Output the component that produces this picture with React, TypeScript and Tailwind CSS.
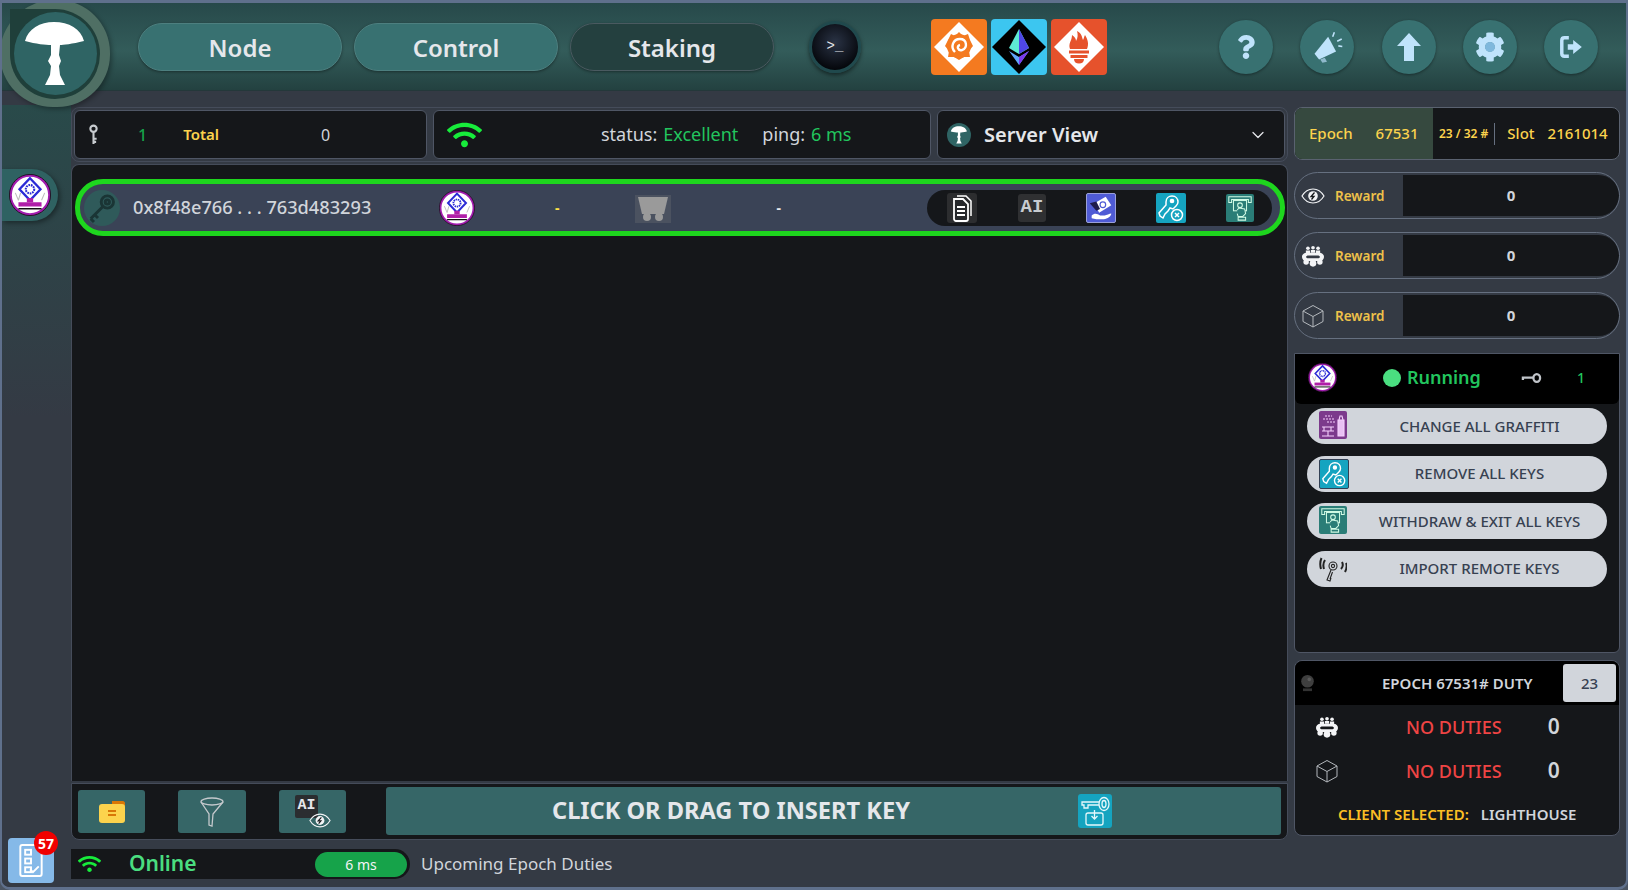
import React from "react";
import { ChevronDown } from "lucide-react";
import { FaQuestion, FaCog, FaWifi } from "react-icons/fa";

const Mushroom = ({ className = "" }: { className?: string }) => (
  <svg viewBox="0 0 110 110" className={className}>
    <path fill="#fff" d="M25 42C28 30 40 23 54 23C69 23 81 30 84 42C72 45 63 46 60 46L59 56L61 62L59 67L60 76L65 86H45L50 76L51 67L48 62L51 56L51 46C46 46 36 45 25 42Z" />
  </svg>
);

const Wcs = ({ className = "" }: { className?: string }) => (
  <svg viewBox="0 0 40 40" className={className}>
    <circle cx="20" cy="20" r="18.5" fill="#fff" stroke="#a21caf" strokeWidth="2.4" />
    <circle cx="20" cy="20" r="19.6" fill="none" stroke="#111" strokeWidth="0.8" />
    <path d="M20 4L30 14.5L20 25L10 14.5Z" fill="#fff" stroke="#2b2bd6" strokeWidth="2.2" />
    <circle cx="20" cy="14.5" r="4" fill="none" stroke="#2b2bd6" strokeWidth="2" strokeDasharray="1.6 0.8" />
    <rect x="17" y="23" width="6" height="4" fill="#b01fa8" />
    <path d="M9 27H31V31H9Z" fill="#b01fa8" />
    <path d="M9 33H31" stroke="#111" strokeWidth="1.4" />
    <path d="M6 18L9 25M11 18L9 25M34 18L31 25" stroke="#bbb" strokeWidth="1" fill="none" />
  </svg>
);

const Key = ({ className = "", stroke = "#d1d5db" }: { className?: string; stroke?: string }) => (
  <svg viewBox="0 0 24 24" className={className} fill="none" stroke={stroke} strokeWidth="2.2">
    <circle cx="16" cy="7.5" r="4.6" />
    <circle cx="16" cy="7.5" r="1.6" />
    <path d="M12.5 11L3.5 20M3.5 20L6 22.5M6.5 17L9 19.5" />
  </svg>
);

const Cube = ({ className = "" }: { className?: string }) => (
  <svg viewBox="0 0 24 24" className={className} fill="none" stroke="#b4b8bd" strokeWidth="1">
    <path d="M12 1.5L22 7V17.5L12 23L2 17.5V7Z" />
    <path d="M2 7L12 12.5L22 7M12 12.5V23" />
  </svg>
);

const Committee = ({ className = "" }: { className?: string }) => (
  <svg viewBox="0 0 24 24" className={className} fill="#f3f4f6">
    <circle cx="6.5" cy="3.5" r="2" />
    <circle cx="12" cy="3" r="2" />
    <circle cx="17.5" cy="3.5" r="2" />
    <path d="M4.2 9V6H8.8V9ZM9.7 8.5V5.5H14.3V8.5ZM15.2 9V6H19.8V9Z" />
    <path fillRule="evenodd" d="M5 8.5H19C22 8.5 24 10.5 24 13C24 15.5 22 17.5 19 17.5H5C2 17.5 0 15.5 0 13C0 10.5 2 8.5 5 8.5ZM7 11.5C5.5 11.5 4.5 12.2 4.5 13C4.5 13.8 5.5 14.5 7 14.5H17C18.5 14.5 19.5 13.8 19.5 13C19.5 12.2 18.5 11.5 17 11.5Z" />
    <circle cx="4.5" cy="18.5" r="3" />
    <circle cx="12" cy="20" r="3.6" />
    <circle cx="19.5" cy="18.5" r="3" />
  </svg>
);

const Eye = ({ className = "" }: { className?: string }) => (
  <svg viewBox="0 0 24 16" className={className} fill="none" stroke="#f3f4f6" strokeWidth="1.2">
    <path d="M1 8C4 3 8 1 12 1C16 1 20 3 23 8C20 13 16 15 12 15C8 15 4 13 1 8Z" />
    <circle cx="12" cy="8" r="4.8" fill="#f3f4f6" stroke="none" />
    <path d="M13.5 4.5L10 8.5H13L10.5 11.5" stroke="#16181b" strokeWidth="1.3" />
  </svg>
);

const Grafana = () => (
  <svg viewBox="0 0 56 56" className="h-full w-full">
    <path d="M28 3L53 28L28 53L3 28Z" fill="#fff" />
    <circle cx="28" cy="27" r="12" fill="#f47a20" />
    <path d="M17 21L20 15L24 17L28 13L32 17L37 15L39 21L42 27L38 32L39 38L33 38L28 41L23 38L17 38L18 32L14 27Z" fill="#f47a20" />
    <path d="M24 33C19 28 22 20 29 20C36 20 37 29 31 31C27 32 25 27 29 26" fill="none" stroke="#fff" strokeWidth="2.4" />
  </svg>
);

const Ethereum = () => (
  <svg viewBox="0 0 56 56" className="h-full w-full">
    <path d="M28 1L55 28L28 55L1 28Z" fill="#000" />
    <path d="M28 10L18 29L28 35L38 29Z" fill="#5eead4" />
    <path d="M28 10V35L38 29Z" fill="#4f46e5" />
    <path d="M18 32L28 46L38 32L28 38Z" fill="#60a5fa" />
    <path d="M28 38V46L38 32Z" fill="#7c3aed" />
  </svg>
);

const Prometheus = () => (
  <svg viewBox="0 0 56 56" className="h-full w-full">
    <path d="M28 3L53 28L28 53L3 28Z" fill="#fff" />
    <path d="M19 30C17 24 21 22 21 16C24 18 25 20 25 22C27 19 27 15 26 12C31 14 31 19 32 21C33 19 33 18 34 16C37 21 38 25 36 30Z" fill="#e6522c" />
    <path d="M18 31.5H38V34.5H18ZM19.5 36H36.5V39H19.5ZM23 40H33C33 43 31 44.5 28 44.5C25 44.5 23 43 23 40Z" fill="#e6522c" />
  </svg>
);

const Doc = () => (
  <svg viewBox="0 0 30 30" className="h-full w-full" fill="none" stroke="#fff" strokeWidth="1.8">
    <path d="M10 3H19L24 8V23" strokeWidth="1.5" />
    <path d="M7 6H16L21 11V26C21 27 20 28 19 28H9C8 28 7 27 7 26Z" fill="#26282b" />
    <path d="M10 14H18M10 18H18M10 22H18" />
  </svg>
);

const KeyRemove = () => (
  <svg viewBox="0 0 30 30" className="h-full w-full" fill="none" stroke="#fff" strokeWidth="1.5">
    <path d="M10 9C10 5 13 3 16 3C20 3 22 6 22 9C22 11 21 12 20 13L17 16L14 15L12 18L9 21L7 25L4 23L3 20L10 12Z" />
    <circle cx="16" cy="8" r="1.6" fill="#fff" />
    <circle cx="21" cy="22" r="5.5" />
    <path d="M19 20L23 24M23 20L19 24" />
  </svg>
);

const Atm = () => (
  <svg viewBox="0 0 30 30" className="h-full w-full" fill="none" stroke="#d1fae5" strokeWidth="1.1">
    <path d="M3 3H27V9H24V6H6V9H3Z" />
    <rect x="8" y="7" width="14" height="11" />
    <circle cx="15" cy="12" r="2.5" />
    <path d="M12 17L14 15L20 16L21 21L18 24H13L12 21M13 25H21V28H13Z" fill="#2a7d77" />
  </svg>
);

const Hand = () => (
  <svg viewBox="0 0 30 30" className="h-full w-full">
    <path d="M8 10L20 3L26 12L13 20Z" fill="#fff" />
    <circle cx="17" cy="11.5" r="3" fill="none" stroke="#4f5bd5" strokeWidth="1.3" />
    <path d="M3 10L10 8L14 16L10 18Z" fill="#1e1b4b" />
    <path d="M5 23C8 20 11 21 14 23H19C21 23 24 21 26 21C26 24 22 27 18 27H10L5 26Z" fill="#fff" />
  </svg>
);

const Graffiti = () => (
  <svg viewBox="0 0 28 28" className="h-full w-full" fill="none" stroke="#f5d0fe" strokeWidth="1.1">
    <path d="M19 9H25V25H19Z" fill="#f5d0fe" fillOpacity="0.9" />
    <path d="M20 9L21 5H23L24 9" />
    <path d="M6 5H13M4 8H15M8 11H16" strokeDasharray="2 1" />
    <path d="M3 16H15M5 16V20M12 16V20M3 20H15M9 20V25M3 25H15" />
  </svg>
);

const Remote = () => (
  <svg viewBox="0 0 28 28" className="h-full w-full" fill="none" stroke="#222" strokeWidth="1.1">
    <circle cx="14" cy="11" r="4" />
    <circle cx="14" cy="11" r="1.6" />
    <path d="M12 15L8 25L11 26L12 23M13.5 17L11 24" />
    <path d="M6 5C4 8 4 11 5 14M2.5 3C0.8 7 0.8 10 2 14M22 14C24 12 24 9 23 7M26 17C28 13 28 10 27 8" strokeWidth="2" />
  </svg>
);

const NavButton = ({ label, dark }: { label: string; dark?: boolean }) => (
  <button
    className={
      dark
        ? "h-[48px] w-[204px] rounded-[24px] border border-[#4a5a60] bg-[#24403f] pt-[3px] text-[24px] font-semibold text-[#e5e7eb] shadow-[0_1px_3px_#0006]"
        : "h-[48px] w-[204px] rounded-[24px] border border-[#4d7f7f] bg-[#387171] pt-[3px] text-[24px] font-semibold text-[#e5e7eb] shadow-[0_1px_3px_#0006]"
    }
  >
    {label}
  </button>
);

const RoundIcon = ({ children }: { children: React.ReactNode }) => (
  <div className="flex h-[54px] w-[54px] items-center justify-center rounded-full bg-[#387171] text-[#bfe3fb] shadow-[0_1px_3px_#0006]">
    {children}
  </div>
);

const Reward = ({ icon }: { icon: React.ReactNode }) => (
  <div className="flex h-[47px] items-center overflow-hidden rounded-[24px] border border-[#667080] bg-[#343a44] py-[2px]">
    <div className="flex w-[108px] shrink-0 items-center pl-[5px]">
      <div className="flex w-[26px] items-center justify-center">{icon}</div>
      <span className="ml-[9px] pt-[1px] text-[13.5px] font-semibold text-[#eec14a]">Reward</span>
    </div>
    <div className="flex h-full flex-1 items-center justify-center rounded-r-[22px] bg-[#15171a] text-[15px] font-bold text-[#d1d5db]">0</div>
  </div>
);

const ActionButton = ({ icon, label }: { icon: React.ReactNode; label: string }) => (
  <button className="flex h-[36px] w-[300px] items-center rounded-[18px] bg-[#d1d5db] pl-[12px] text-[15px] font-medium text-[#374151]">
    <span className="h-[30px] w-[28px] shrink-0">{icon}</span>
    <span className="flex-1 pl-[5px] text-center">{label}</span>
  </button>
);

const ToolButton = ({ children, className }: { children: React.ReactNode; className: string }) => (
  <div className={className}>{children}</div>
);

export default function App() {
  return (
    <div className="h-[890px] w-[1628px] bg-[#4b5563] font-['Noto_Sans',sans-serif]">
      <div className="relative flex h-full w-full flex-col overflow-hidden rounded-b-[10px] border-x-[2px] border-t-[3px] border-b-[3px] border-[#5f708c] bg-[#343a44]">
        {/* Logo */}
        <div className="absolute left-[-2px] top-[-3px] z-20 flex h-[107px] w-[110px] items-center justify-center rounded-[58px_56px_56px_56px] bg-[#4f6f64] shadow-[2px_2px_5px_#0005]">
          <div className="flex h-[90px] w-[90px] items-center justify-center rounded-[0_45px_45px_45px] bg-[#1f3f3a]">
            <div className="flex h-[83px] w-[83px] items-center justify-center rounded-full bg-[#2f6464]">
              <Mushroom className="h-[110px] w-[110px] shrink-0" />
            </div>
          </div>
        </div>

        {/* Header */}
        <header className="flex h-[88px] shrink-0 items-center border-b border-[#24383a] bg-[linear-gradient(180deg,#27494a_0%,#335c5a_55%,#234140_100%)] pl-[136px]">
          <div className="flex gap-[12px]">
            <NavButton label="Node" />
            <NavButton label="Control" />
            <NavButton label="Staking" dark />
          </div>
          <div className="ml-[35px] flex h-[52px] w-[52px] items-center justify-center rounded-full border-[3px] border-[#20494d] bg-[radial-gradient(circle_at_50%_40%,#2a3345,#05070c_75%)] shadow-[0_2px_4px_#0008]">
            <span className="font-['Liberation_Mono',monospace] text-[14px] text-[#e5e7eb]">&gt;_</span>
          </div>
          <div className="ml-[70px] flex gap-[4px]">
            <div className="h-[56px] w-[56px] rounded-[4px] bg-[#f47a20]"><Grafana /></div>
            <div className="h-[56px] w-[56px] rounded-[4px] bg-[#3cc6f0]"><Ethereum /></div>
            <div className="h-[56px] w-[56px] rounded-[4px] bg-[#e6522c]"><Prometheus /></div>
          </div>
          <div className="ml-[112px] flex gap-[27.3px]">
            <RoundIcon><FaQuestion className="h-[24px] w-[18px]" /></RoundIcon>
            <RoundIcon>
              <svg viewBox="0 0 30 30" className="h-[34px] w-[34px]" fill="currentColor">
                <path d="M4 21L16 6L23 19L8 26Z" />
                <path d="M9 26L13 24.5L15 28L11 29Z" fill="#8fb9cc" />
                <path d="M20 6L21.5 2M24 10L28 8M25 14L28.5 14.5" fill="none" stroke="currentColor" strokeWidth="1.4" />
              </svg>
            </RoundIcon>
            <RoundIcon>
              <svg viewBox="0 0 24 28" className="h-[28px] w-[24px]" fill="currentColor">
                <path d="M12 0L24 13H17V28H7V13H0Z" />
              </svg>
            </RoundIcon>
            <RoundIcon>
              <div className="relative flex h-[30px] w-[30px] items-center justify-center">
                <FaCog className="h-[30px] w-[30px]" />
                <span className="absolute h-[10px] w-[10px] rounded-full bg-[#7fb8dc]" />
              </div>
            </RoundIcon>
            <RoundIcon>
              <svg viewBox="0 0 24 24" className="h-[26px] w-[26px]">
                <path d="M10 3.5H6C4.5 3.5 3.5 4.5 3.5 6V18C3.5 19.5 4.5 20.5 6 20.5H10" fill="none" stroke="currentColor" strokeWidth="3.2" />
                <path d="M9 9.5H14V5.5L22 12L14 18.5V14.5H9Z" fill="currentColor" />
              </svg>
            </RoundIcon>
          </div>
        </header>

        {/* Body */}
        <div className="flex min-h-0 flex-1">
          {/* Sidebar */}
          <aside className="mt-[14px] flex w-[69px] shrink-0 flex-col bg-[linear-gradient(180deg,#294a4a_0%,#343a44_40%)]">
            <div className="mt-[64px] flex h-[52px] w-[56px] items-center justify-center rounded-r-[26px] bg-[#2f6262] pr-[1px] shadow-[2px_2px_5px_#0006]">
              <Wcs className="h-[42px] w-[42px]" />
            </div>
            <div className="relative mb-[4px] ml-[6px] mt-auto h-[45px] w-[46px] rounded-[4px] bg-[#85b9e8] p-[6px]">
              <svg viewBox="0 0 30 34" className="h-full w-full" fill="none" stroke="#fff" strokeWidth="2">
                <rect x="4" y="1" width="22" height="32" rx="2" />
                <rect x="9" y="6" width="6" height="5" />
                <rect x="9" y="15" width="6" height="5" />
                <rect x="9" y="24" width="6" height="5" />
                <path d="M14 26L17 29L23 23" />
              </svg>
              <span className="absolute right-[-4px] top-[-7px] flex h-[24px] w-[24px] items-center justify-center rounded-full bg-[#f00000] text-[14px] font-bold text-white">57</span>
            </div>
          </aside>

          {/* Main */}
          <main className="flex w-[1217px] shrink-0 flex-col pt-[16px]">
            <div className="flex h-[55px] gap-[6px] rounded-[8px] border border-[#454c5a] p-[2px]">
              <div className="flex h-[49px] w-[353px] items-center rounded-[6px] border border-[#4f5665] bg-[#15171a] pl-[13px]">
                <svg viewBox="0 0 10 20" className="h-[21px] w-[11px]" fill="none" stroke="#c8ccd0" strokeWidth="2">
                  <circle cx="5" cy="4.5" r="3" />
                  <path d="M5 8V19M5 14H8M5 17H7.5" />
                </svg>
                <span className="ml-[39px] text-[16px] font-medium text-[#16a34a]">1</span>
                <span className="ml-[36px] text-[15px] font-semibold text-[#fcd34d]">Total</span>
                <span className="ml-[102px] text-[16px] text-[#d1d5db]">0</span>
              </div>
              <div className="flex h-[49px] w-[498px] items-center rounded-[6px] border border-[#4f5665] bg-[#15171a] pl-[12px]">
                <FaWifi className="h-[28px] w-[37px] text-[#17ec3b]" />
                <span className="ml-[118px] text-[18px] text-[#d1d5db]">status:</span>
                <span className="ml-[6px] text-[18px] text-[#22c55e]">Excellent</span>
                <span className="ml-[24px] text-[18px] text-[#d1d5db]">ping:</span>
                <span className="ml-[6px] text-[18px] text-[#22c55e]">6 ms</span>
              </div>
              <div className="flex h-[49px] w-[348px] items-center rounded-[6px] border border-[#4f5665] bg-[#15171a] pl-[9px]">
                <div className="flex h-[24px] w-[24px] items-center justify-center rounded-full bg-[#2f6464]">
                  <Mushroom className="h-[30px] w-[30px] shrink-0" />
                </div>
                <span className="ml-[13px] text-[20px] font-semibold text-[#e5e7eb]">Server View</span>
                <ChevronDown className="ml-auto mr-[16px] h-[20px] w-[20px] text-[#e5e7eb]" strokeWidth={1.5} />
              </div>
            </div>

            <section className="mt-[2px] h-[617px] rounded-t-[8px] border-x border-t border-[#454c5a] bg-[#15171a] px-[3px] pt-[14px]">
              <div className="flex h-[57px] w-[1210px] items-center rounded-[28px] border-[5px] border-[#1ed61e] bg-[#3a4356] pl-[4px]">
                <div className="flex h-[36px] w-[36px] items-center justify-center rounded-full bg-[#2f5a5a]">
                  <Key className="h-[32px] w-[32px]" stroke="#1a3535" />
                </div>
                <span className="ml-[13px] w-[306px] text-[18.2px] font-medium text-[#d1d5db]">0x8f48e766 . . . 763d483293</span>
                <Wcs className="h-[36px] w-[36px] shrink-0" />
                <span className="ml-[80px] text-[14px] font-bold text-[#fde047]">-</span>
                <div className="ml-[76px] mt-[3px] flex h-[28px] w-[36px] items-center justify-center bg-[#4b5260]">
                  <svg viewBox="0 0 36 28" className="h-full w-full" fill="#9a9a9a">
                    <path d="M3 2H33L29 19H7Z" />
                    <circle cx="12" cy="22" r="4" />
                    <circle cx="24" cy="22" r="4" />
                  </svg>
                </div>
                <span className="ml-[105px] text-[14px] font-bold text-[#e5e7eb]">-</span>
                <div className="ml-[146px] flex h-[36px] w-[345px] items-center rounded-[18px] bg-[#15171a] pl-[20px]">
                  <div className="h-[30px] w-[30px] rounded-[3px] bg-[#2c2d2f]"><Doc /></div>
                  <div className="ml-[41px] flex h-[28px] w-[28px] items-center justify-center rounded-[3px] bg-[#2f3032] font-['Liberation_Mono',monospace] text-[19px] font-bold text-[#c7cbd0]">AI</div>
                  <div className="ml-[40px] h-[30px] w-[30px] rounded-[2px] border border-[#9aa0d8] bg-[#4f5bd5]"><Hand /></div>
                  <div className="ml-[40px] h-[30px] w-[30px] rounded-[2px] bg-[#15a4c0]"><KeyRemove /></div>
                  <div className="ml-[40px] h-[28px] w-[28px] rounded-[2px] bg-[#2a7d77]"><Atm /></div>
                </div>
              </div>
            </section>

            <div className="mt-[2px] flex h-[57px] rounded-b-[8px] border-x border-b border-t border-[#454c5a] bg-[#15171a] pl-[6px] pr-[6px] pt-[3px]">
              <ToolButton className="mt-[3px] flex h-[43px] w-[67px] items-center justify-center rounded-[3px] bg-[#366667]">
                <svg viewBox="0 0 28 24" className="h-[24px] w-[28px]">
                  <path d="M14 1H25C26 1 27 2 27 3V6H14Z" fill="#d97706" />
                  <rect x="1" y="4" width="26" height="19" rx="3" fill="#fcd34d" />
                  <path d="M10 11H18M10 15H18" stroke="#d97706" strokeWidth="2" />
                </svg>
              </ToolButton>
              <ToolButton className="ml-[33px] mt-[3px] flex h-[43px] w-[68px] items-center justify-center rounded-[3px] bg-[#366667]">
                <svg viewBox="0 0 28 30" className="h-[30px] w-[28px]" fill="none" stroke="#c5c9cd" strokeWidth="1.3">
                  <ellipse cx="14" cy="4.5" rx="11" ry="3.5" />
                  <path d="M3 5L11 17V28L14 29L15 17L25 5" />
                </svg>
              </ToolButton>
              <ToolButton className="relative ml-[33px] mt-[3px] h-[43px] w-[67px] rounded-[3px] bg-[#366667]">
                <span className="absolute left-[16px] top-[5px] flex h-[23px] w-[23px] items-center justify-center rounded-[2px] bg-[#2b2d30] font-['Liberation_Mono',monospace] text-[15px] font-bold text-[#e5e7eb]">AI</span>
                <span className="absolute left-[30px] top-[23px] h-[15px] w-[22px]"><Eye className="h-full w-full" /></span>
              </ToolButton>
              <button className="ml-[40px] flex h-[48px] w-[895px] items-center rounded-[3px] bg-[#366667] pl-[166px] text-[23.6px] font-bold text-[#e5e7eb]">
                CLICK OR DRAG TO INSERT KEY
                <span className="ml-[168px] block h-[34px] w-[34px] rounded-[3px] bg-[#15a4c0] p-[2px]">
                  <svg viewBox="0 0 30 30" fill="none" stroke="#e5f8fb" strokeWidth="1.3" className="h-full w-full">
                    <ellipse cx="24" cy="8" rx="5" ry="6.5" />
                    <ellipse cx="24" cy="8" rx="2" ry="3.5" />
                    <path d="M19 6H2V9H4V12H8V9H19" />
                    <rect x="6" y="17" width="17" height="12" rx="2" />
                    <path d="M14.5 14V23M11.5 20L14.5 23L17.5 20" />
                  </svg>
                </span>
              </button>
            </div>

            <div className="mt-[9px] flex items-center">
              <div className="flex h-[30px] w-[339px] items-center rounded-r-[15px] bg-[#15171a] pl-[7px]">
                <FaWifi className="h-[20px] w-[23px] text-[#17ec3b]" />
                <span className="ml-[28px] text-[21px] font-semibold text-[#4ade80]">Online</span>
                <span className="ml-[auto] mr-[3px] flex h-[25px] w-[92px] items-center justify-center rounded-full bg-[#16a34a] text-[14px] text-[#f3f4f6]">6 ms</span>
              </div>
              <span className="ml-[11px] text-[17px] text-[#d1d5db]">Upcoming Epoch Duties</span>
            </div>
          </main>

          {/* Right column */}
          <div className="ml-[6px] flex w-[326px] shrink-0 flex-col pt-[16px]">
            <div className="flex h-[53px] overflow-hidden rounded-[8px] border border-[#5a6270] bg-[#15171a] text-[#fcd34d]">
              <div className="flex w-[138px] items-center bg-[#36493f] pl-[14px] text-[15px] font-medium">
                <span>Epoch</span>
                <span className="ml-[23px]">67531</span>
              </div>
              <span className="ml-[6px] self-center text-[12px] font-semibold">23 / 32 #</span>
              <span className="ml-[6px] h-[22px] w-px self-center bg-[#667080]" />
              <span className="ml-[12px] self-center text-[15px] font-medium">Slot</span>
              <span className="ml-[13px] self-center text-[15px] font-medium">2161014</span>
            </div>

            <div className="mt-[12px] flex flex-col gap-[13px]">
              <Reward icon={<Eye className="h-[16px] w-[24px]" />} />
              <Reward icon={<Committee className="h-[22px] w-[22px]" />} />
              <Reward icon={<Cube className="h-[24px] w-[24px]" />} />
            </div>

            <section className="mt-[14px] h-[300px] rounded-b-[6px] border border-[#4f5665] bg-[#15171a]">
              <div className="flex h-[50px] items-center rounded-b-[6px] bg-black pb-[3px] pl-[13px]">
                <Wcs className="h-[29px] w-[29px]" />
                <span className="ml-[46px] h-[18px] w-[18px] rounded-full bg-[#4ade80]" />
                <span className="ml-[6px] text-[18px] font-semibold text-[#22c55e]">Running</span>
                <svg viewBox="0 0 22 12" className="ml-[40px] h-[12px] w-[21px]" fill="none" stroke="#c0c4c9" strokeWidth="2.4">
                  <ellipse cx="16.5" cy="6" rx="3.5" ry="4" />
                  <path d="M13 5.5H2V8" />
                </svg>
                <span className="ml-[35px] text-[14px] font-medium text-[#22c55e]">1</span>
              </div>
              <div className="mt-[4px] flex flex-col gap-[11.5px] pl-[12px]">
                <ActionButton icon={<div className="h-[28px] w-[28px] rounded-[2px] bg-[#7c3a8c]"><Graffiti /></div>} label="CHANGE ALL GRAFFITI" />
                <ActionButton icon={<div className="h-[30px] w-[30px] rounded-[2px] border border-[#334155] bg-[#15a4c0]"><KeyRemove /></div>} label="REMOVE ALL KEYS" />
                <ActionButton icon={<div className="h-[28px] w-[28px] rounded-[2px] bg-[#2a7d77]"><Atm /></div>} label="WITHDRAW & EXIT ALL KEYS" />
                <ActionButton icon={<Remote />} label="IMPORT REMOTE KEYS" />
              </div>
            </section>

            <section className="mt-[7px] h-[176px] rounded-[8px] border border-[#4f5665] bg-[#15171a]">
              <div className="flex h-[44px] items-center rounded-t-[8px] bg-black pl-[5px]">
                <svg viewBox="0 0 16 20" className="h-[18px] w-[15px]">
                  <circle cx="8" cy="8" r="7" fill="#3f3f3f" />
                  <circle cx="10" cy="6" r="2" fill="#5a5a5a" />
                  <path d="M3 16H13V19H3Z" fill="#333" />
                </svg>
                <span className="ml-[67px] text-[15px] font-semibold text-[#d1d5db]">EPOCH 67531# DUTY</span>
                <span className="ml-auto mr-[3px] flex h-[38px] w-[53px] items-center justify-center rounded-[3px] bg-[#d1d5db] text-[15px] font-medium text-[#374151]">23</span>
              </div>
              <div className="flex h-[44px] items-center">
                <Committee className="ml-[21px] h-[22px] w-[22px]" />
                <span className="ml-[68px] text-[18px] font-medium text-[#ef4444]">NO DUTIES</span>
                <span className="ml-[46px] text-[21px] font-semibold text-[#d1d5db]">0</span>
              </div>
              <div className="flex h-[44px] items-center">
                <Cube className="ml-[20px] h-[24px] w-[24px]" />
                <span className="ml-[67px] text-[18px] font-medium text-[#ef4444]">NO DUTIES</span>
                <span className="ml-[46px] text-[21px] font-semibold text-[#d1d5db]">0</span>
              </div>
              <div className="flex h-[42px] items-center pl-[43px] text-[15px] font-semibold">
                <span className="text-[#fbbf24]">CLIENT SELECTED:</span>
                <span className="ml-[12px] text-[#d1d5db]">LIGHTHOUSE</span>
              </div>
            </section>
          </div>
        </div>
      </div>
    </div>
  );
}
